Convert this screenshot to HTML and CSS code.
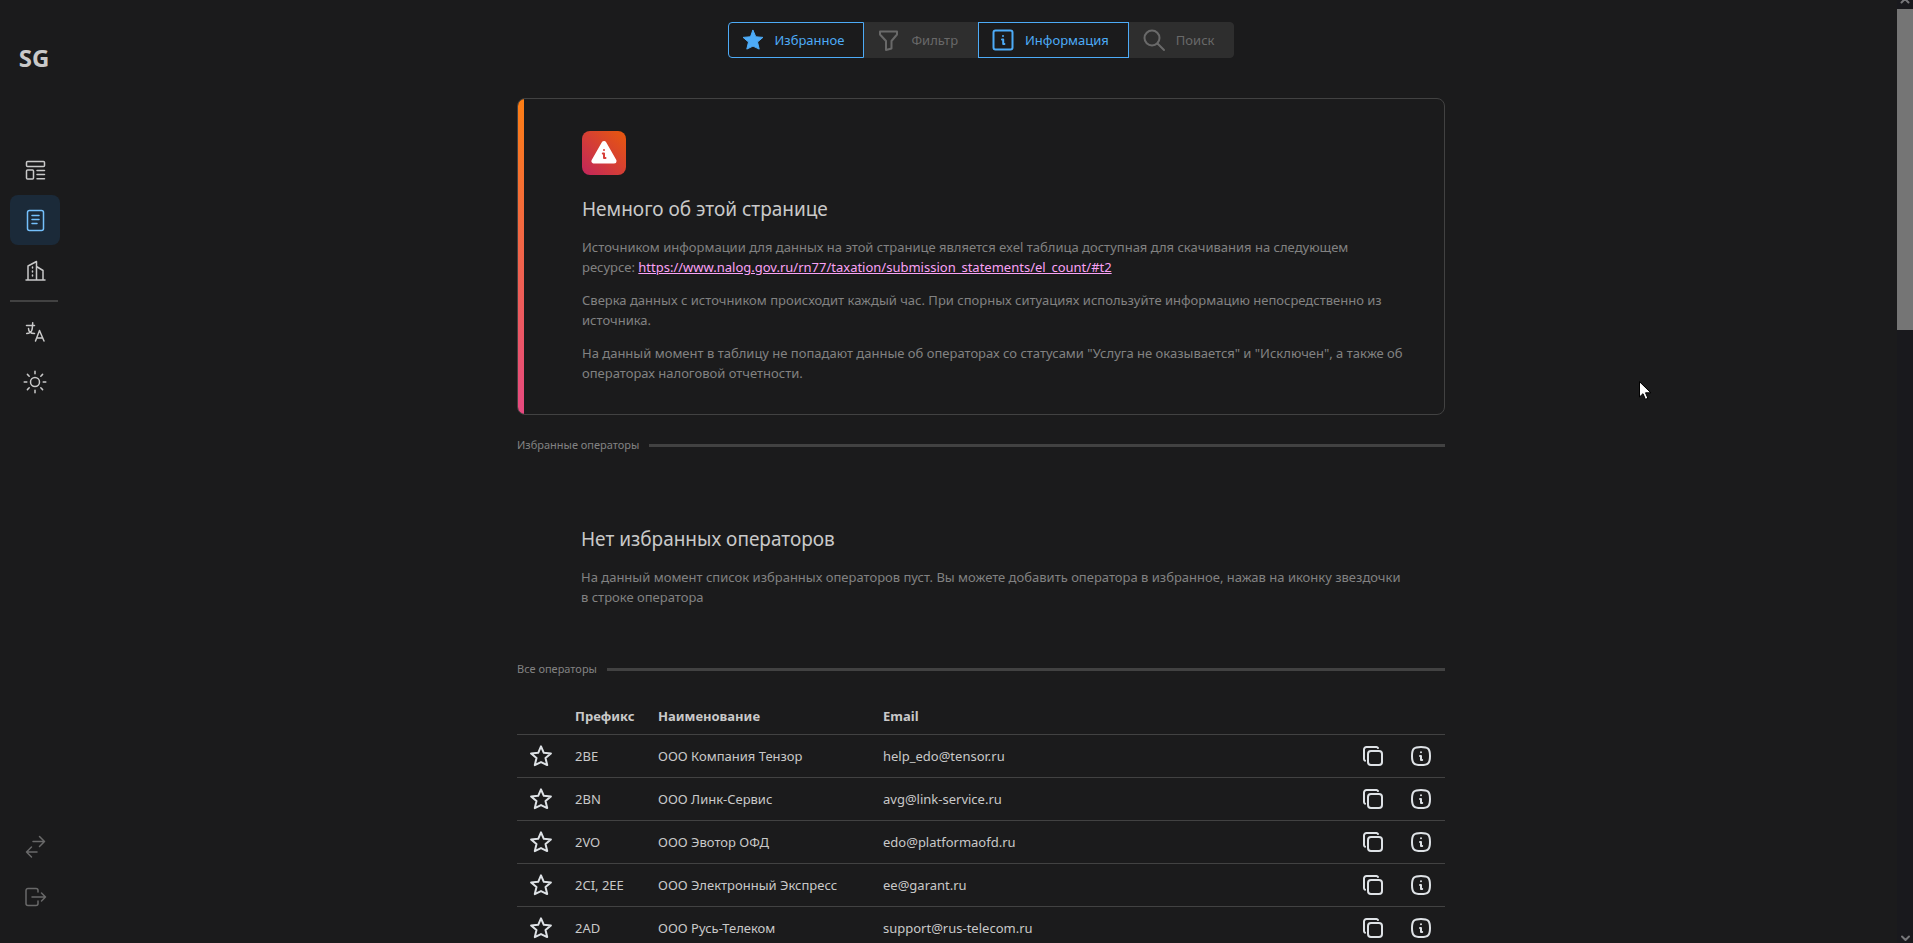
FILE: index.html
```html
<!DOCTYPE html>
<html lang="ru">
<head>
<meta charset="utf-8">
<title>SG</title>
<link rel="stylesheet" href="styles.css">
</head>
<body>
<svg class="sprite" aria-hidden="true">
  <symbol id="i-star" viewBox="0 0 24 24"><path d="M12 2.3l2.8 6.5 7.1.6-5.4 4.6 1.7 7.1-6.2-3-6.2 3 1.7-7.1-5.4-4.6 7.1-.6z"/></symbol>
  <symbol id="i-copy" viewBox="0 0 24 24"><rect x="7" y="7" width="14" height="14" rx="3"/><path d="M4 16.7a2 2 0 0 1-1-1.700V5.500A2.500 2.500 0 0 1 5.500 3H15.500c.800 0 1.200.400 1.500 1"/></symbol>
  <symbol id="i-about" viewBox="0 0 24 24"><path d="M12 3c7.200 0 9 1.800 9 9s-1.800 9-9 9-9-1.800-9-9 1.800-9 9-9z"/><path d="M12 8.200v.1M11 12h1v4h1.200"/></symbol>
</svg>
<div class="app">
  <aside class="sidebar">
    <div class="logo">SG</div>
    <nav class="nav">
      <a class="nav-link" href="#" aria-label="Шаблоны"><svg viewBox="0 0 24 24"><rect x="3.500" y="3.500" width="18" height="5" rx="1"/><rect x="3.500" y="12" width="7" height="9" rx="1"/><path d="M14 12.500h7.500M14 16.500h7.500M14 20.700h7.500"/></svg></a>
      <a class="nav-link active" href="#" aria-label="Операторы"><svg viewBox="0 0 24 24"><rect x="4.500" y="2.500" width="16" height="20" rx="2"/><path d="M9 7.500h7M9 11.500h7M9 15.500h5"/></svg></a>
      <a class="nav-link" href="#" aria-label="Организации"><svg viewBox="0 0 24 24"><path d="M3 22h19M5 22V8l8.500-4.500V22M13.500 8.500l6.500 4V22"/><path d="M9.500 9v11" stroke-dasharray="1 3"/></svg></a>
      <hr class="nav-line">
      <button class="nav-link" type="button" aria-label="Язык"><svg viewBox="0 0 24 24"><path d="M3.500 5.500h8M9.700 2.800c-.3 6 0 10.500-6 10.700M5.500 8.500c0 4 2.500 5 6 5M12.500 21l4-10.500 4.500 10.500M14 18h5.500"/></svg></button>
      <button class="nav-link" type="button" aria-label="Тема"><svg viewBox="0 0 24 24"><circle cx="12" cy="12" r="4.500"/><path d="M12 1.200v2.600M12 20.200v2.600M1.200 12h2.600M20.200 12h2.600M4.400 4.400l1.800 1.800M17.800 17.800l1.800 1.800M4.400 19.600l1.800-1.800M17.800 6.200l1.800-1.800"/></svg></button>
    </nav>
    <nav class="nav nav-bottom">
      <button class="nav-link muted" type="button" aria-label="Сменить аккаунт"><svg viewBox="0 0 24 24"><path d="M10 6.500h11.500M16.500 1.500l5 5-5 5M14 17H3.500M8.500 12l-5 5 5 5"/></svg></button>
      <button class="nav-link muted" type="button" aria-label="Выход"><svg viewBox="0 0 24 24"><path d="M15 7V5.500a2 2 0 0 0-2-2H5a2 2 0 0 0-2 2v13a2 2 0 0 0 2 2h8a2 2 0 0 0 2-2V16M9 12h13.500M18.500 8l4 4-4 4"/></svg></button>
    </nav>
  </aside>

  <main class="main">
    <div class="content">
      <div class="toolbar">
        <button class="tool on" type="button"><svg class="solid" viewBox="0 0 24 24"><use href="#i-star"/></svg>Избранное</button>
        <button class="tool" type="button"><svg viewBox="0 0 24 24"><path d="M3 3.500h17v3l-5.500 6.500v7.500l-5.500 1.500v-9L3 6.500z"/></svg>Фильтр</button>
        <button class="tool on" type="button"><svg viewBox="0 0 24 24"><rect x="2.500" y="2.500" width="19" height="19" rx="2"/><path d="M12 8v.1M11 11.500h1.200V16h1.200"/></svg>Информация</button>
        <button class="tool" type="button"><svg viewBox="0 0 24 24"><circle cx="10" cy="10" r="7.500"/><path d="M15.500 15.500l6.500 6.500"/></svg>Поиск</button>
      </div>

      <section class="card">
        <div class="card-icon"><svg viewBox="0 0 28 28"><path class="tri" d="M14 4.500L4 22h20z"/><path class="letter" d="M14 11v.1M12.800 14.500H14v4.500h1.500"/></svg></div>
        <h2 class="title">Немного об этой странице</h2>
        <p class="text">Источником информации для данных на этой странице является exel таблица доступная для скачивания на следующем<br>ресурсе: <a class="link" href="https://www.nalog.gov.ru/rn77/taxation/submission_statements/el_count/#t2">https://www.nalog.gov.ru/rn77/taxation/submission_statements/el_count/#t2</a></p>
        <p class="text">Сверка данных с источником происходит каждый час. При спорных ситуациях используйте информацию непосредственно из источника.</p>
        <p class="text">На данный момент в таблицу не попадают данные об операторах со статусами "Услуга не оказывается" и "Исключен", а также об операторах налоговой отчетности.</p>
      </section>

      <div class="divider">Избранные операторы</div>
      <section class="empty">
        <h2 class="title">Нет избранных операторов</h2>
        <p class="text">На данный момент список избранных операторов пуст. Вы можете добавить оператора в избранное, нажав на иконку звездочки в&nbsp;строке оператора</p>
      </section>
      <div class="divider">Все операторы</div>

      <table class="operators">
        <thead>
          <tr><th class="col-star"></th><th class="col-prefix">Префикс</th><th class="col-name">Наименование</th><th>Email</th><th class="col-actions"></th></tr>
        </thead>
        <tbody>
          <tr><td><button class="icon" type="button" aria-label="В избранное"><svg><use href="#i-star"/></svg></button></td><td>2BE</td><td>ООО Компания Тензор</td><td>help_edo@tensor.ru</td><td><div class="actions"><button class="icon" type="button" aria-label="Копировать"><svg><use href="#i-copy"/></svg></button><button class="icon" type="button" aria-label="Подробнее"><svg><use href="#i-about"/></svg></button></div></td></tr>
          <tr><td><button class="icon" type="button" aria-label="В избранное"><svg><use href="#i-star"/></svg></button></td><td>2BN</td><td>ООО Линк-Сервис</td><td>avg@link-service.ru</td><td><div class="actions"><button class="icon" type="button" aria-label="Копировать"><svg><use href="#i-copy"/></svg></button><button class="icon" type="button" aria-label="Подробнее"><svg><use href="#i-about"/></svg></button></div></td></tr>
          <tr><td><button class="icon" type="button" aria-label="В избранное"><svg><use href="#i-star"/></svg></button></td><td>2VO</td><td>ООО Эвотор ОФД</td><td>edo@platformaofd.ru</td><td><div class="actions"><button class="icon" type="button" aria-label="Копировать"><svg><use href="#i-copy"/></svg></button><button class="icon" type="button" aria-label="Подробнее"><svg><use href="#i-about"/></svg></button></div></td></tr>
          <tr><td><button class="icon" type="button" aria-label="В избранное"><svg><use href="#i-star"/></svg></button></td><td>2CI, 2EE</td><td>ООО Электронный Экспресс</td><td>ee@garant.ru</td><td><div class="actions"><button class="icon" type="button" aria-label="Копировать"><svg><use href="#i-copy"/></svg></button><button class="icon" type="button" aria-label="Подробнее"><svg><use href="#i-about"/></svg></button></div></td></tr>
          <tr><td><button class="icon" type="button" aria-label="В избранное"><svg><use href="#i-star"/></svg></button></td><td>2AD</td><td>ООО Русь-Телеком</td><td>support@rus-telecom.ru</td><td><div class="actions"><button class="icon" type="button" aria-label="Копировать"><svg><use href="#i-copy"/></svg></button><button class="icon" type="button" aria-label="Подробнее"><svg><use href="#i-about"/></svg></button></div></td></tr>
        </tbody>
      </table>
    </div>
  </main>

  <div class="scrollbar" aria-hidden="true">
    <svg class="arrow" viewBox="0 0 16 9"><path d="M4.500 2.500L8 -1l3.500 3.500"/></svg>
    <div class="thumb"></div>
    <svg class="arrow" viewBox="0 0 16 9"><path d="M5 2.500l3.500 3.500L12 2.500"/></svg>
  </div>
</div>
<svg class="cursor" viewBox="0 0 12 19" aria-hidden="true"><path d="M.5 1v15l3.500-3.300 2.400 5.600 2.500-1-2.400-5.500h5z"/></svg>
</body>
</html>
```

FILE: styles.css
```css
* { box-sizing: border-box; }
body {
  margin: 0;
  background: #1b1b1c;
  color: #c9c9c9;
  font-family: "Noto Sans", "Open Sans", sans-serif;
  font-size: 13px;
  line-height: 20px;
}
button { font: inherit; color: inherit; background: none; border: 0; padding: 0; cursor: pointer; }
svg { fill: none; stroke: currentColor; stroke-linecap: round; stroke-linejoin: round; }
.sprite { display: none; }

.app { display: grid; grid-template-columns: 65px 1fr 16px; height: 100vh; overflow: hidden; }

.sidebar { display: flex; flex-direction: column; padding: 42px 0 21px 10px; }
.logo { width: 48px; text-align: center; font-size: 24px; font-weight: 700; line-height: 32px; margin-bottom: 71px; }
.nav { display: flex; flex-direction: column; width: 50px; }
.nav-bottom { margin-top: auto; }
.nav-link { display: flex; align-items: center; justify-content: center; width: 50px; height: 50px; border-radius: 8px; color: #c9c9c9; }
.nav-link svg { width: 24px; height: 24px; stroke-width: 1.5; }
.nav-link.active { background: #1b2a39; color: #74c0fc; }
.nav-link.muted { color: #696969; }
.nav-line { width: 48px; height: 2px; margin: 5px 0; border: 0; background: #424242; }

.main { overflow: hidden; padding: 22px 32px 0; }
.content { max-width: 928px; margin: 0 auto; }

.toolbar { display: flex; justify-content: center; margin-bottom: 40px; }
.tool { display: flex; align-items: center; gap: 10px; height: 36px; padding: 0 19px 0 12px; border: 1px solid #2e2e2e; background: #2e2e2e; color: #696969; }
.tool:first-child { border-radius: 4px 0 0 4px; }
.tool:last-child { border-radius: 0 4px 4px 0; }
.tool.on { border-color: #4dabf7; background: #1b1b1c; color: #4dabf7; }
.tool svg { width: 24px; height: 24px; stroke-width: 2; }
.tool svg.solid { fill: currentColor; stroke-width: 1; }

.card { position: relative; overflow: hidden; padding: 32px 32px 31px 64px; border: 1px solid #424242; border-radius: 8px; }
.card::before { content: ""; position: absolute; top: 0; bottom: 0; left: 0; width: 6px; background: linear-gradient(#fd7e14, #e64980); }
.card-icon { display: flex; align-items: center; justify-content: center; width: 44px; height: 44px; margin-bottom: 20px; border-radius: 8px; background: linear-gradient(45deg, #c2255c, #e8590c); }
.card-icon svg { width: 28px; height: 28px; }
.tri { fill: #fff; stroke: #fff; stroke-width: 5; }
.letter { stroke: #d63f38; stroke-width: 2; }
.title { margin: 0 0 14px; font-size: 19px; font-weight: 400; line-height: 28px; }
.text { margin: 0; font-size: 13px; color: #828282; }
.text + .text { margin-top: 13px; }
.link { color: #faa2f6; text-decoration: underline; }

.divider { display: flex; align-items: center; gap: 10px; font-size: 11px; color: #828282; }
.divider::after { content: ""; flex: 1; height: 3px; background: #424242; }
.card + .divider { margin-top: 20px; }
.empty { padding: 70px 32px 52px 64px; }

.operators { width: 100%; margin-top: 19px; border-collapse: collapse; table-layout: fixed; }
.operators th, .operators td { height: 43px; padding: 0 10px; border-bottom: 1px solid #424242; text-align: left; }
.operators th { height: 36px; font-weight: 700; }
.operators td:first-child, .operators td:last-child { padding: 0 12px; }
.col-star { width: 48px; }
.col-prefix { width: 83px; }
.col-name { width: 225px; }
.col-actions { width: 104px; }
.icon { display: flex; color: #dee2e6; }
.icon svg { width: 24px; height: 24px; stroke-width: 2; }
.actions { display: flex; justify-content: flex-end; gap: 24px; }

.scrollbar { display: flex; flex-direction: column; background: #19191d; color: #77777a; }
.arrow { width: 16px; height: 9px; stroke-width: 2; }
.thumb { height: 34vh; margin-bottom: auto; background: #757575; }
.cursor { position: absolute; left: 1639px; top: 381px; width: 12px; height: 19px; fill: #fff; stroke: #000; stroke-width: 1; }
```
